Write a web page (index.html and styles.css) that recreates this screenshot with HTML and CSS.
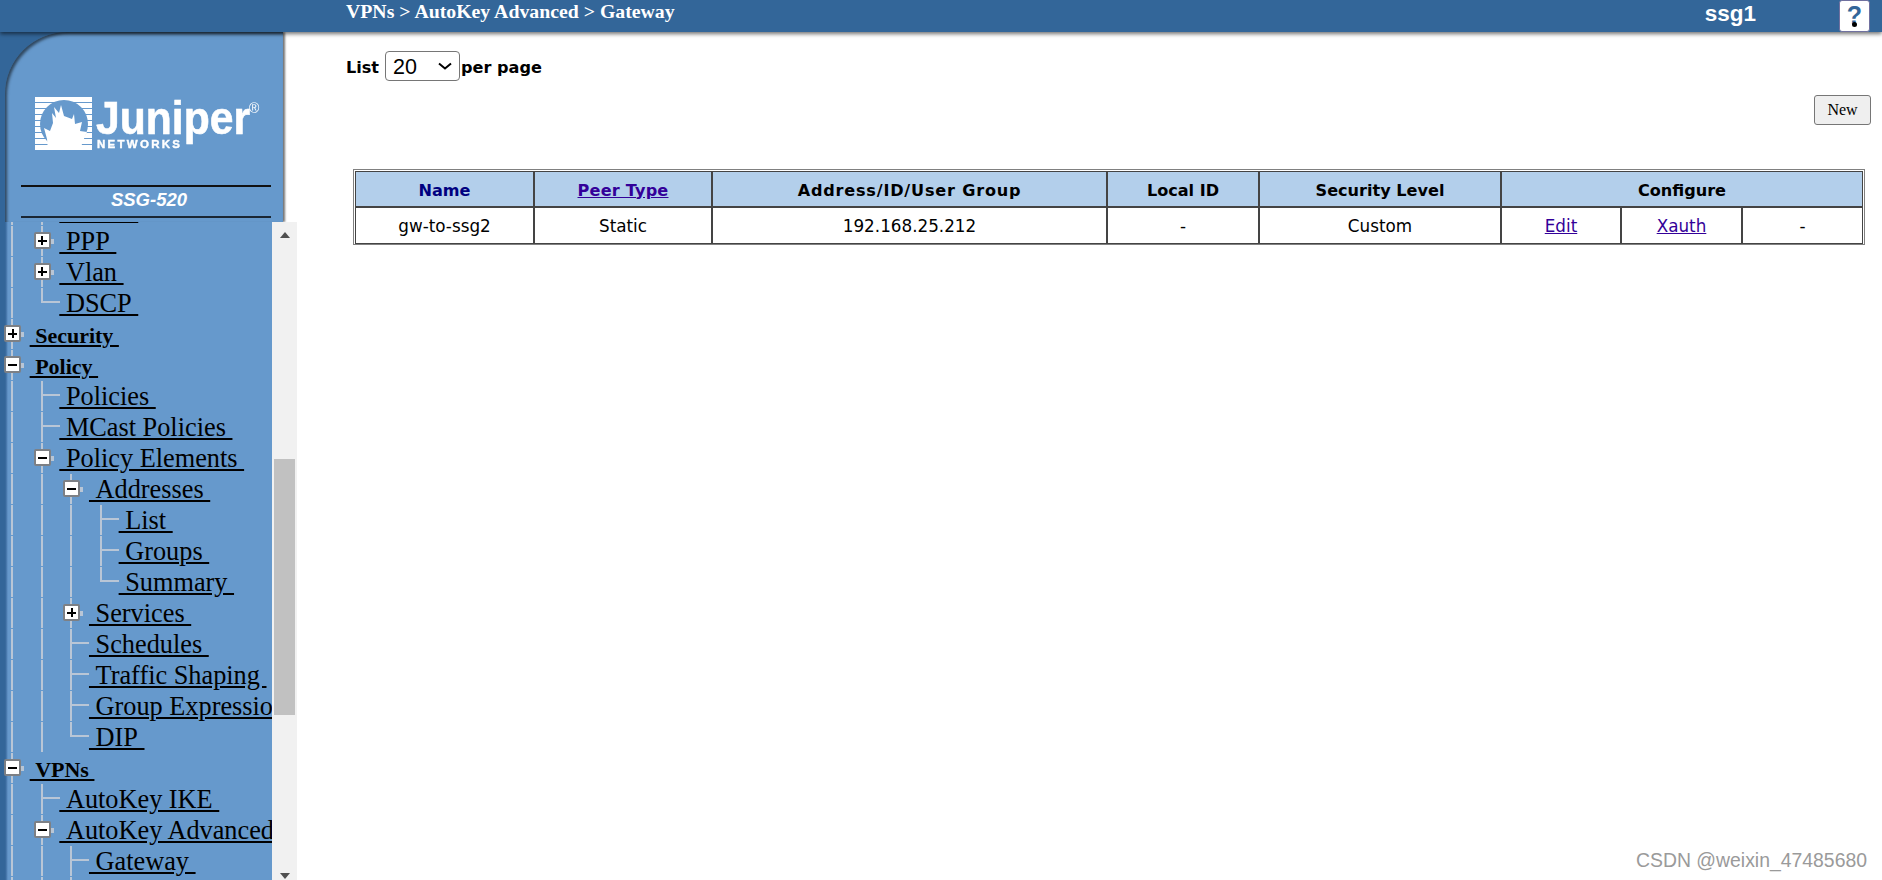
FILE: index.html
```html
<!DOCTYPE html>
<html lang="en">
<head>
<meta charset="utf-8">
<title>VPNs &gt; AutoKey Advanced &gt; Gateway</title>
<link rel="stylesheet" href="styles.css">
</head>
<body>
<header class="topbar">
  <div class="crumb">VPNs &gt; AutoKey Advanced &gt; Gateway</div>
  <div class="device">ssg1</div>
  <a class="help" href="#"><span class="help-q">?</span><span class="help-dot"></span></a>
</header>
<div class="app">
  <aside class="side">
    <div class="brand">
      <div class="brand-panel">
        <svg class="logo" viewBox="30 95 235 58" width="235" height="58" aria-label="Juniper Networks">
          <rect x="35" y="97" width="57" height="53" fill="#fff"/>
          <g stroke="#6699cc" stroke-width="1">
            <path d="M35 102.5H92M35 108.5H92M35 114.5H92M35 120.5H92M35 126.5H92M35 132.5H92M35 138.5H92M35 144.5H92"/>
          </g>
          <circle cx="64" cy="124" r="24" fill="#6699cc"/>
          <path fill="#fff" d="M48 150L47 139L44 128L50 131L53 123L52 113L56 118L54 107L59 113L61 105L64 116L72 119L74 114L75 124L82 122L80 131L87 132L83 141L80 150Z"/>
          <text class="logo-word" x="96" y="134" textLength="154" lengthAdjust="spacingAndGlyphs">Juniper</text>
          <text class="logo-sub" x="97" y="148" textLength="83">NETWORKS</text>
          <text class="logo-reg" x="249" y="113">®</text>
        </svg>
        <div class="model">SSG-520</div>
      </div>
    </div>
    <div class="treewrap">
      <nav class="tree">
        <div class="row first"><span class="g"></span><span class="n plus"></span><a href="#">&nbsp;NSRP&nbsp;</a></div>
        <div class="row"><span class="g"></span><span class="n plus"></span><a href="#">&nbsp;PPP&nbsp;</a></div>
        <div class="row"><span class="g"></span><span class="n plus"></span><a href="#">&nbsp;Vlan&nbsp;</a></div>
        <div class="row"><span class="g"></span><span class="n end"></span><a href="#">&nbsp;DSCP&nbsp;</a></div>
        <div class="row top"><span class="n plus"></span><a href="#">&nbsp;Security&nbsp;</a></div>
        <div class="row top"><span class="n minus"></span><a href="#">&nbsp;Policy&nbsp;</a></div>
        <div class="row"><span class="g"></span><span class="n"></span><a href="#">&nbsp;Policies&nbsp;</a></div>
        <div class="row"><span class="g"></span><span class="n"></span><a href="#">&nbsp;MCast Policies&nbsp;</a></div>
        <div class="row"><span class="g"></span><span class="n minus"></span><a href="#">&nbsp;Policy Elements&nbsp;</a></div>
        <div class="row"><span class="g"></span><span class="g"></span><span class="n minus"></span><a href="#">&nbsp;Addresses&nbsp;</a></div>
        <div class="row"><span class="g"></span><span class="g"></span><span class="g"></span><span class="n"></span><a href="#">&nbsp;List&nbsp;</a></div>
        <div class="row"><span class="g"></span><span class="g"></span><span class="g"></span><span class="n"></span><a href="#">&nbsp;Groups&nbsp;</a></div>
        <div class="row"><span class="g"></span><span class="g"></span><span class="g"></span><span class="n end"></span><a href="#">&nbsp;Summary&nbsp;</a></div>
        <div class="row"><span class="g"></span><span class="g"></span><span class="n plus"></span><a href="#">&nbsp;Services&nbsp;</a></div>
        <div class="row"><span class="g"></span><span class="g"></span><span class="n"></span><a href="#">&nbsp;Schedules&nbsp;</a></div>
        <div class="row"><span class="g"></span><span class="g"></span><span class="n"></span><a href="#">&nbsp;Traffic Shaping&nbsp;</a></div>
        <div class="row"><span class="g"></span><span class="g"></span><span class="n"></span><a href="#">&nbsp;Group Expressions&nbsp;</a></div>
        <div class="row"><span class="g"></span><span class="g"></span><span class="n end"></span><a href="#">&nbsp;DIP&nbsp;</a></div>
        <div class="row top"><span class="n minus"></span><a href="#">&nbsp;VPNs&nbsp;</a></div>
        <div class="row"><span class="g"></span><span class="n"></span><a href="#">&nbsp;AutoKey IKE&nbsp;</a></div>
        <div class="row"><span class="g"></span><span class="n minus"></span><a href="#">&nbsp;AutoKey Advanced&nbsp;</a></div>
        <div class="row"><span class="g"></span><span class="g"></span><span class="n"></span><a href="#">&nbsp;Gateway&nbsp;</a></div>
        <div class="row"><span class="g"></span><span class="g"></span><span class="n"></span><a href="#">&nbsp;P1 Proposal&nbsp;</a></div>
      </nav>
      <div class="scrollbar">
        <span class="arrow up"></span>
        <span class="thumb"></span>
        <span class="arrow down"></span>
      </div>
    </div>
  </aside>
  <main class="main">
    <form class="pager">
      <span class="lbl">List</span>
      <select class="pagesize"><option>20</option><option>50</option><option>100</option></select>
      <span class="lbl">per page</span>
    </form>
    <div class="actions"><button class="btn" type="button">New</button></div>
    <table class="grid">
      <colgroup>
        <col class="c1"><col class="c2"><col class="c3"><col class="c4"><col class="c5"><col class="c6"><col class="c7"><col class="c8">
      </colgroup>
      <thead>
        <tr>
          <th class="navy">Name</th>
          <th class="peer"><a href="#">Peer Type</a></th>
          <th class="wide">Address/ID/User Group</th>
          <th>Local ID</th>
          <th>Security Level</th>
          <th colspan="3">Configure</th>
        </tr>
      </thead>
      <tbody>
        <tr>
          <td>gw-to-ssg2</td>
          <td>Static</td>
          <td>192.168.25.212</td>
          <td>-</td>
          <td>Custom</td>
          <td><a href="#">Edit</a></td>
          <td><a href="#">Xauth</a></td>
          <td>-</td>
        </tr>
      </tbody>
    </table>
  </main>
</div>
<div class="watermark">CSDN @weixin_47485680</div>
</body>
</html>
```
FILE: styles.css
```css
*, *::before, *::after { box-sizing: border-box; }
html, body { margin: 0; height: 100%; }
body {
  height: 880px;
  overflow: hidden;
  background: #fff;
  font-family: "DejaVu Sans", sans-serif;
  color: #000;
}
.topbar {
  position: relative;
  z-index: 2;
  display: flex;
  height: 32px;
  padding: 0 12px 0 346px;
  background: #336699;
  color: #fff;
  box-shadow: 0 2px 4px rgba(0, 0, 0, .55);
}
.crumb {
  flex: 1;
  font: bold 19.8px/23px "Liberation Serif", serif;
}
.device {
  margin-right: 83px;
  font: bold 22.5px/27px "Liberation Sans", sans-serif;
}
.help {
  position: relative;
  display: flex;
  justify-content: center;
  width: 31px;
  height: 32px;
  background: #fff;
  border: 1px solid #70709f;
  border-radius: 3px;
  text-decoration: none;
}
.help-q {
  font: bold 25px/29px "Liberation Sans", sans-serif;
  color: #336699;
}
.help-dot {
  position: absolute;
  left: 12px;
  top: 21px;
  width: 5px;
  height: 5px;
  background: #000;
  border-radius: 50%;
}
.app { display: flex; height: 848px; }
.side { flex: none; width: 297px; display: flex; flex-direction: column; }
.brand {
  flex: none;
  width: 283px;
  height: 190px;
  background: #336699;
  box-shadow: 2px 0 2px rgba(0, 0, 0, .55);
}
.brand-panel {
  height: 100%;
  margin-left: 5px;
  padding-top: 63px;
  background: #6699cc;
  border-top-left-radius: 62px;
  box-shadow: inset 2px 2px 3px rgba(0, 0, 0, .55);
}
.logo { display: block; margin-left: 25px; filter: blur(.4px); }
.logo-word { font: bold 46px "Liberation Sans", sans-serif; fill: #fff; stroke: #fff; stroke-width: .6px; }
.logo-sub { font: bold 11.5px "Liberation Sans", sans-serif; fill: #fff; stroke: #fff; stroke-width: .4px; }
.logo-reg { font: 14px "Liberation Sans", sans-serif; fill: #fff; }
.model {
  width: 250px;
  height: 33px;
  margin: 32px 0 0 16px;
  padding-left: 6px;
  border-top: 2px solid #111;
  border-bottom: 2px solid #1a2633;
  font: italic bold 18.5px/26px "Liberation Sans", sans-serif;
  color: #fff;
  text-align: center;
}
.treewrap { flex: 1; display: flex; min-height: 0; }
.tree {
  flex: none;
  width: 272px;
  overflow: hidden;
  background: linear-gradient(to right, #336699 5px, #3f6fa3 6px, #6699cc 8px);
}
.row {
  display: flex;
  height: 31px;
  white-space: nowrap;
  font: 26.3px/32px "Liberation Serif", serif;
}
.row.first { margin-top: -27px; }
.row a { color: #000; text-decoration: underline; }
.row.top { font: bold 22px/34px "Liberation Serif", serif; }
.g, .n { position: relative; flex: none; width: 29.67px; height: 31px; }
.g::before, .n::before {
  content: "";
  position: absolute;
  left: 11px;
  top: 0;
  width: 2px;
  height: 30px;
  background: #b9c6d6;
}
.n.end::before { height: 15px; }
.n::after {
  content: "";
  position: absolute;
  left: 11px;
  top: 13px;
  width: 19px;
  height: 2px;
  background: #b9c6d6;
}
.plus::after, .minus::after {
  left: 4px;
  top: 6px;
  width: 17px;
  height: 17px;
  background-color: #fff;
  background-position: center;
  background-repeat: no-repeat;
  border: 2px solid #7d8085;
  border-radius: 2px;
  box-shadow: 9px 1px 0 -6px #b9c6d6;
}
.plus::after {
  background-image: linear-gradient(#000, #000), linear-gradient(#000, #000);
  background-size: 9px 2px, 2px 9px;
}
.minus::after {
  background-image: linear-gradient(#000, #000);
  background-size: 9px 2px;
}
.scrollbar {
  flex: none;
  width: 25px;
  display: flex;
  flex-direction: column;
  align-items: center;
  padding-top: 10px;
  background: #f1f1f1;
}
.arrow { flex: none; width: 0; height: 0; border-left: 5.5px solid transparent; border-right: 5.5px solid transparent; }
.arrow.up { border-bottom: 6px solid #505050; }
.arrow.down { border-top: 6px solid #505050; margin-top: 158px; }
.thumb { flex: none; width: 21px; height: 256px; margin-top: 221px; background: #c1c1c1; }
.main { flex: 1; min-width: 0; padding: 19px 11px 0 49px; }
.pager { display: flex; align-items: center; gap: 6px; height: 30px; font-weight: bold; font-size: 16.1px; }
.lbl { padding-top: 3px; }
.pagesize {
  appearance: none;
  width: 75px;
  height: 30px;
  margin-right: -5px;
  padding: 1px 0 0 7px;
  font: 21.5px "Liberation Sans", sans-serif;
  color: #000;
  background: #fff url("data:image/svg+xml,%3Csvg xmlns='http://www.w3.org/2000/svg' width='16' height='8'%3E%3Cpath d='M2 1.5L8 6.5L14 1.5' fill='none' stroke='%23000' stroke-width='2'/%3E%3C/svg%3E") no-repeat 51px 10px;
  border: 1px solid #767676;
  border-radius: 4px;
}
.actions { display: flex; justify-content: flex-end; margin-top: 14px; }
.btn {
  width: 57px;
  height: 30px;
  padding: 0;
  font: 16px "Liberation Serif", serif;
  color: #000;
  background: #efefef;
  border: 1px solid #767676;
  border-radius: 3px;
}
.grid {
  width: 1510px;
  margin: 44px 0 0 7px;
  table-layout: fixed;
  border-collapse: separate;
  border-spacing: 0;
  padding: 1px 1px 0;
  border: 1px solid #808080;
  font-size: 16.8px;
}
.c1 { width: 179px; } .c2 { width: 178px; } .c3 { width: 395px; } .c4 { width: 152px; }
.c5 { width: 242px; } .c6 { width: 120px; } .c7 { width: 121px; } .c8 { width: 121px; }
.grid th, .grid td { border: 1px solid #444; padding: 1px 0 0; text-align: center; font-weight: normal; }
.grid th { height: 36px; padding-top: 2px; font-weight: bold; font-size: 16.1px; background: #b3cfeb; }
.grid th.wide { letter-spacing: .8px; }
.grid th.peer { letter-spacing: .2px; }
.grid td { height: 37px; background: #fff; }
.grid a { color: #330099; }
.grid th.navy { color: #000080; }
.watermark {
  position: absolute;
  right: 15px;
  bottom: 8px;
  font: 19.4px "Liberation Sans", sans-serif;
  color: #9a9a9a;
}
```
